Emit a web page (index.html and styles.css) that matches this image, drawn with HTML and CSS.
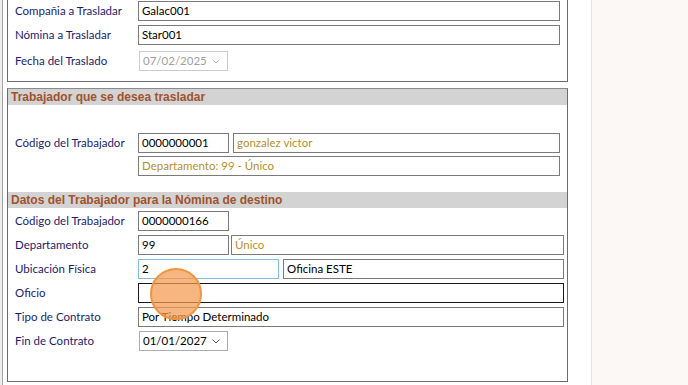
FILE: index.html
```html
<!DOCTYPE html>
<html lang="es">
<head>
    <meta charset="UTF-8">
    <meta name="viewport" content="width=device-width, initial-scale=1.0">
    <title>Traslado de Trabajador</title>
    <link rel="stylesheet" href="styles.css">
</head>
<body>

<div class="screen">
    <div class="form">

        <!-- Datos de la nomina -->
        <section class="panel panel-top">
            <div class="rows">
                <label>Compañia a Trasladar</label>
                <div class="field"><span class="box w-full">Galac001</span></div>

                <label>Nómina a Trasladar</label>
                <div class="field"><span class="box w-full">Star001</span></div>

                <label class="row-date">Fecha del Traslado</label>
                <div class="field row-date">
                    <span class="box date disabled">07/02/2025
                        <svg class="chev" width="8" height="5" viewBox="0 0 8 5"><polyline points="0.5,0.5 4,4 7.5,0.5" fill="none" stroke="currentColor" stroke-width="1"/></svg>
                    </span>
                </div>
            </div>
        </section>

        <section class="panel panel-bottom">
            <h2 class="band">Trabajador que se desea trasladar</h2>
            <div class="rows rows-origin">
                <label>Código del Trabajador</label>
                <div class="field">
                    <span class="box w-code">0000000001</span>
                    <span class="box w-name gold">gonzalez victor</span>
                </div>

                <label></label>
                <div class="field"><span class="box w-full gold">Departamento: 99 - Único</span></div>
            </div>

            <h2 class="band band-dest">Datos del Trabajador para la Nómina de destino</h2>
            <div class="rows rows-dest">
                <label>Código del Trabajador</label>
                <div class="field"><span class="box w-code">0000000166</span></div>

                <label>Departamento</label>
                <div class="field tight">
                    <span class="box w-code">99</span>
                    <span class="box w-dept gold">Único</span>
                </div>

                <label>Ubicación Física</label>
                <div class="field">
                    <span class="box w-ubic focus">2</span>
                    <span class="box w-place">Oficina ESTE</span>
                </div>

                <label>Oficio</label>
                <div class="field"><span class="box w-wide active"></span></div>

                <label>Tipo de Contrato</label>
                <div class="field"><span class="box w-wide">Por Tiempo Determinado</span></div>

                <label>Fin de Contrato</label>
                <div class="field">
                    <span class="box date">01/01/2027
                        <svg class="chev" width="8" height="5" viewBox="0 0 8 5"><polyline points="0.5,0.5 4,4 7.5,0.5" fill="none" stroke="currentColor" stroke-width="1"/></svg>
                    </span>
                </div>
            </div>
        </section>

    </div>
    <div class="side"></div>

    <!-- marca del clic -->
    <span class="click-mark"></span>
</div>

</body>
</html>
```

FILE: styles.css
```css
body, html {
    margin: 0;
    padding: 0;
    font-family: Lato, "Liberation Sans", Arial, sans-serif;
    font-size: 11.5px;
    background: #ffffff;
    overflow: hidden;
}

/* Contenedor general */
.screen {
    position: relative;
    display: flex;
    height: 385px;
    padding-left: 2px;
    background: #ededed;
    overflow: hidden;
}

.form {
    width: 588px;
    flex: none;
    border-left: 1px solid #a3a3a3;
    background: #ffffff;
}

.side {
    flex: 1;
    border-left: 1px solid #e3e3e3;
    background: #fbf8f5;
}

/* Paneles */
.panel {
    width: 559px;
    margin-left: 4px;
    border: 1px solid #6b6b6b;
    background: #ffffff;
}

.panel-top {
    margin-top: -6px;
    padding: 6px 0 12px 0;
}

.panel-bottom {
    margin-top: 6px;
    border-top-color: #8a8a8a;
    padding-bottom: 30px;
}

.band {
    margin: 0;
    height: 16px;
    line-height: 16px;
    padding-left: 3px;
    background: #d3d3d3;
    color: #a0522d;
    font-family: "Liberation Sans", Arial, sans-serif;
    font-size: 12px;
    font-weight: bold;
}

.band-dest {
    margin-top: 16px;
}

/* Filas */
.rows {
    display: grid;
    grid-template-columns: 123px auto;
    grid-auto-rows: 20px;
    row-gap: 4px;
    padding-left: 7px;
}

.rows label {
    color: #1c1c6e;
    line-height: 20px;
    white-space: nowrap;
}

.rows .row-date {
    margin-top: 2px;
}

.rows-origin {
    padding-top: 28px;
    row-gap: 3px;
}

.rows-dest {
    padding-top: 3px;
}

.field {
    display: flex;
    gap: 4px;
}

.field.tight {
    gap: 2px;
}

/* Cajas de texto */
.box {
    box-sizing: border-box;
    height: 20px;
    line-height: 18px;
    padding-left: 3px;
    border: 1px solid #7a7a7a;
    background: #ffffff;
    color: #000000;
    white-space: nowrap;
    overflow: hidden;
}

.box.gold {
    color: #b8902c;
}

.box.focus {
    border-color: #7fbde3;
}

.box.active {
    border-color: #1a1a1a;
}

.w-full { width: 422px; }
.w-code { width: 91px; }
.w-name { width: 327px; }
.w-dept { width: 333px; }
.w-ubic { width: 141px; }
.w-place { width: 281px; }
.w-wide { width: 426px; }

.box.date {
    display: flex;
    align-items: center;
    justify-content: space-between;
    width: 89px;
    margin-left: 1px;
    padding-right: 7px;
    border-color: #adadad;
}

.box.disabled {
    color: #a0a0a0;
    border-color: #cccccc;
}

.chev {
    color: #555555;
}

.box.disabled .chev {
    color: #b5b5b5;
}

/* Marca del clic */
.click-mark {
    position: absolute;
    left: 150px;
    top: 268px;
    width: 48px;
    height: 48px;
    border: 2px solid #f0953f;
    border-radius: 50%;
    background: rgba(244, 153, 78, 0.72);
}
```
